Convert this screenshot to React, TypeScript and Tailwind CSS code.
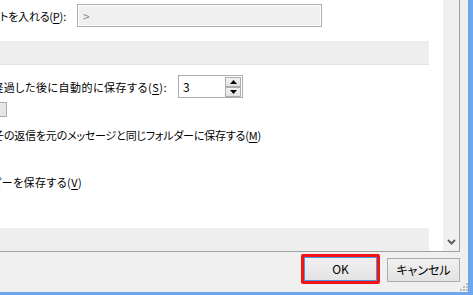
const font = "font-['Meiryo_UI','Noto_Sans_CJK_JP','Noto_Sans',sans-serif] [font-feature-settings:'palt']"

function Mn({ c }: { c: string }) {
  return <span className="underline underline-offset-[2px]">{c}</span>
}

// label that keeps its right end fixed and clips the start, like a scrolled dialog
function Clip({
  width,
  pr = 0,
  track = 'tracking-[-0.2px]',
  children,
}: {
  width: number
  pr?: number
  track?: string
  children: React.ReactNode
}) {
  return (
    <div
      className={`flex justify-end overflow-hidden whitespace-nowrap shrink-0 text-[11px] ${track}`}
      style={{ width, paddingRight: pr }}
    >
      <span className="shrink-0">{children}</span>
    </div>
  )
}

function SpinButton({ up }: { up?: boolean }) {
  return (
    <div className="h-[10px] w-[16px] border border-[#acacac] bg-linear-to-b from-[#f2f2f2] to-[#e2e2e2] flex items-center justify-center">
      <svg width="7" height="4" viewBox="0 0 7 4">
        {up ? <path d="M0 4 L3.5 0 L7 4 Z" fill="#000" /> : <path d="M0 0 L3.5 4 L7 0 Z" fill="#000" />}
      </svg>
    </div>
  )
}

export default function App() {
  return (
    <div
      className={`relative w-[473px] h-[295px] overflow-hidden bg-[#f0f0f0] border-r-[5px] border-b-[3px] border-[#6ca6ef] text-[12px] leading-[16px] text-black ${font}`}
    >
      {/* scrolled options panel */}
      <div className="flex w-[460px] h-[252px] border-r border-b border-[#a0a0a0]">
        <div className="w-[443px] h-full bg-white overflow-hidden flex flex-col">
          <div className="flex items-center h-[23px] mt-[4px]">
            <Clip width={77} pr={11}>
              各行の先頭にテキストを入れる(<Mn c="P" />):
            </Clip>
            <div className="w-[245px] h-[23px] border border-[#adadad] bg-[#f0f0f0] shadow-[inset_0_0_0_1px_#ffffff] flex items-center pl-[5px] text-[#8a8a8a]">
              &gt;
            </div>
          </div>

          <div className="mt-[14px] w-[429px] h-[24px] bg-[#eeeeee] border-b border-[#e0e3e7]" />

          <div className="flex items-center h-[23px] mt-[10px]">
            <Clip width={178} pr={11} track="tracking-[0.5px]">
              次の時間 (分) が経過した後に自動的に保存する(<Mn c="S" />):
            </Clip>
            <div className="w-[65px] h-[23px] border border-[#abadb3] bg-white flex items-start">
              <span className="flex-1 pl-[4px] leading-[21px]">3</span>
              <div className="flex flex-col pt-[1px] mr-[1px]">
                <SpinButton up />
                <SpinButton />
              </div>
            </div>
          </div>

          <div className="mt-[4px] w-[7px] h-[15px] border border-l-0 border-[#adadad] bg-[#e6e6e6]" />

          <div className="mt-[10px] h-[16px]">
            <Clip width={261} track="tracking-[-0.2px]">
              他のフォルダーでは、その返信を元のメッセージと同じフォルダーに保存する(<Mn c="M" />)
            </Clip>
          </div>

          <div className="mt-[31px] h-[16px]">
            <Clip width={82} track="tracking-[0.4px]">
              メッセージのコピーを保存する(<Mn c="V" />)
            </Clip>
          </div>

          <div className="mt-[38px] w-[429px] h-[23px] bg-[#eeeeee]" />
        </div>

        <div className="w-[16px] h-full bg-[#f0f0f0] flex flex-col justify-end items-center pb-[6px]">
          <svg width="9" height="6" viewBox="0 0 9 6">
            <path d="M1 1 L4.5 4.5 L8 1" fill="none" stroke="#606060" strokeWidth="2" />
          </svg>
        </div>
      </div>

      {/* dialog buttons */}
      <div className="flex items-start h-[40px]">
        <div className="ml-[301px] mt-[2px] w-[79px] h-[30px] border-[3px] border-[#f01414] rounded-[2px]">
          <div className="w-full h-full border border-[#4f95e0] bg-linear-to-b from-[#f0f0f0] to-[#e3e3e3] flex items-center justify-center">
            OK
          </div>
        </div>
        <div className="ml-[7px] mt-[6px] w-[73px] h-[24px] border border-[#acacac] bg-linear-to-b from-[#f0f0f0] to-[#e3e3e3] flex items-center justify-center">
          キャンセル
        </div>
      </div>

      {/* size grip */}
      <svg className="absolute right-0 bottom-[1px]" width="8" height="8" viewBox="0 0 8 8">
        <rect x="6" y="0" width="2" height="2" fill="#bcbcbc" />
        <rect x="3" y="3" width="2" height="2" fill="#bcbcbc" />
        <rect x="6" y="3" width="2" height="2" fill="#bcbcbc" />
        <rect x="0" y="6" width="2" height="2" fill="#bcbcbc" />
        <rect x="3" y="6" width="2" height="2" fill="#bcbcbc" />
        <rect x="6" y="6" width="2" height="2" fill="#bcbcbc" />
      </svg>
    </div>
  )
}
